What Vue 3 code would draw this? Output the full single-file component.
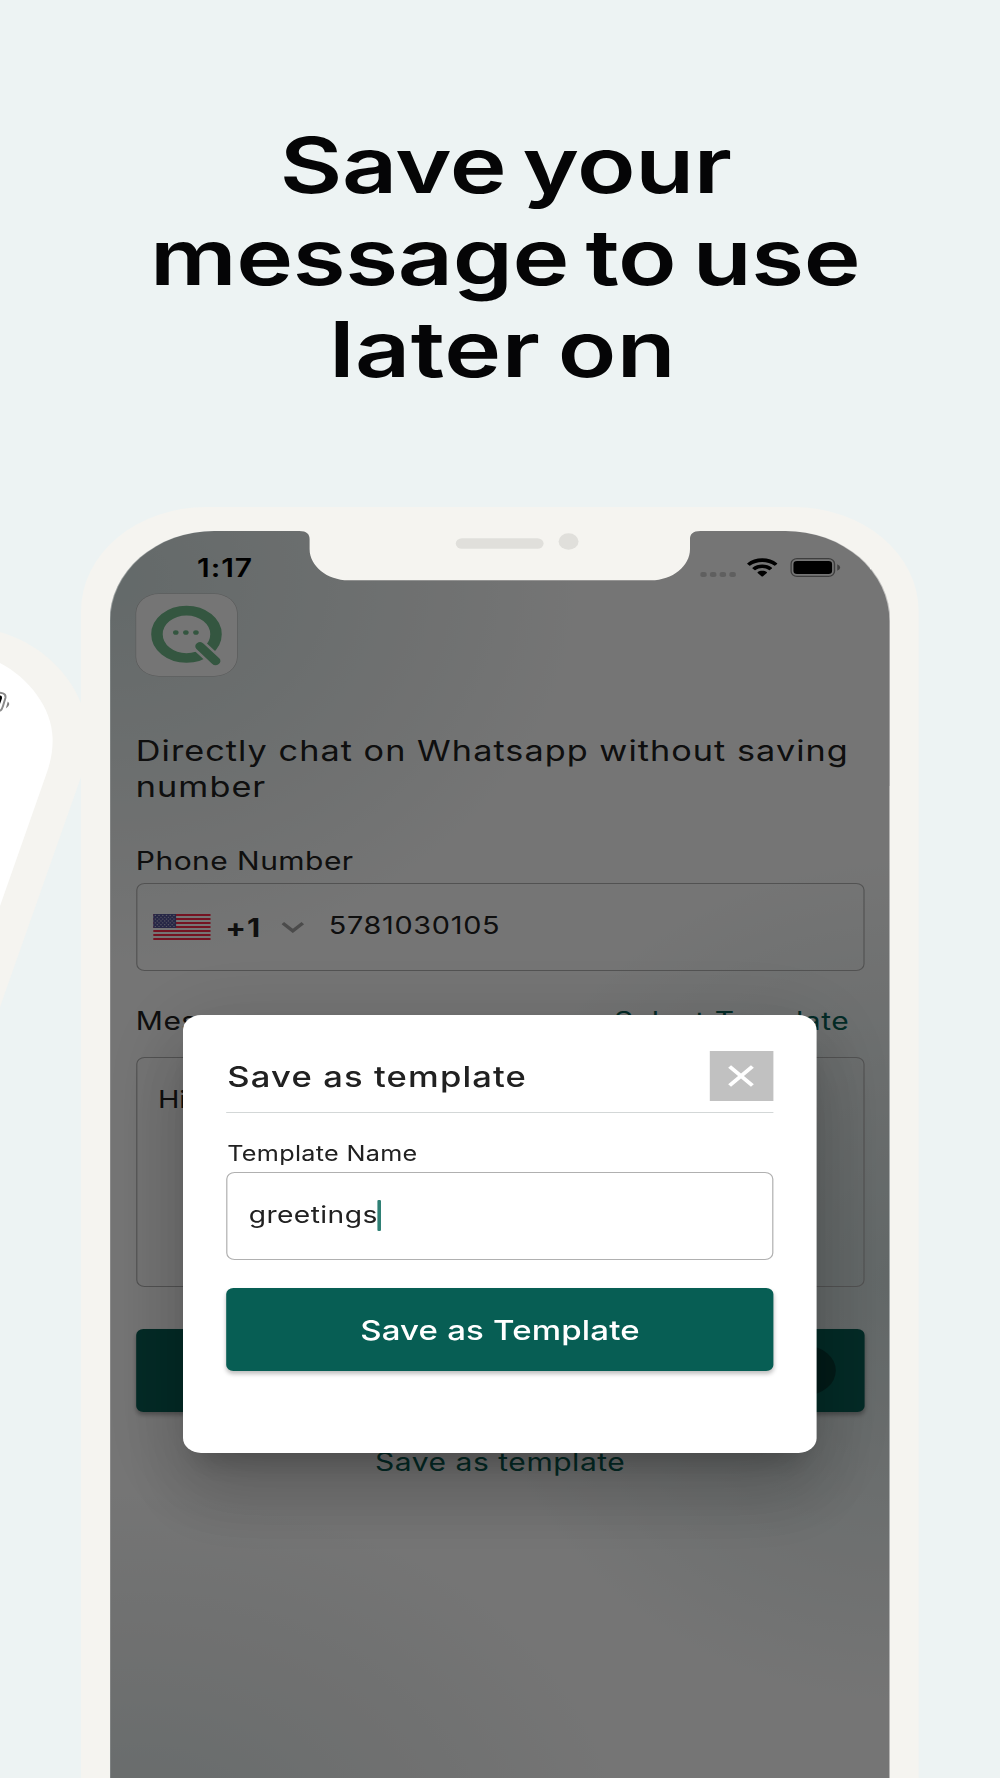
<template>
  <main class="promo">
    <h1 class="headline">
      <span v-for="line in headline" :key="line" class="headline-line">{{ line }}</span>
    </h1>

    <!-- neighbouring phone peeking in from the left -->
    <svg class="side-phone" viewBox="0 0 90 400" aria-hidden="true">
      <path class="side-frame" d="M0 12C34 22 66 46 81 83C90 108 89 135 81 157L0 387Z" />
      <path class="side-screen" d="M0 43C29 58 52 88 52.6 118C53 132 50 144 46 155L0 286Z" />
      <path class="side-battery" d="M0 72.6L3 73.4Q6 74.4 5.4 78L3 86Q2 89.6 0 91" />
      <path class="side-charge" d="M0 75.5Q2.4 75.4 1.9 78.5L0 84Z" />
      <path class="side-nub" d="M7.8 81.5Q11.5 84.5 5.8 88.5Z" />
    </svg>

    <section class="phone">
      <div class="screen">
        <div class="app">
          <header class="status">
            <span class="time">1:17</span>
            <div class="status-icons">
              <svg class="dots" viewBox="0 0 30 5">
                <rect v-for="n in 4" :key="n" :x="(n - 1) * 8.1" width="5.4" height="5" rx="1.8" />
              </svg>
              <svg class="wifi" viewBox="0 0 25.4 19">
                <path d="M12.7 .3C7.9 .3 3.5 2.2 .3 5.2Q0 5.6 .3 6L1.9 7.6Q2.3 8 2.7 7.6C5.4 5.2 8.9 3.9 12.7 3.9S20 5.2 22.7 7.6Q23.1 8 23.5 7.6L25.1 6Q25.4 5.6 25.1 5.2C21.9 2.2 17.5 .3 12.7 .3Z" />
                <path d="M12.7 6.5C9.6 6.5 6.8 7.7 4.6 9.7Q4.3 10.1 4.6 10.5L6.3 12.1Q6.7 12.5 7.1 12.1C8.6 10.8 10.5 10.1 12.7 10.1S16.8 10.8 18.3 12.1Q18.7 12.5 19.1 12.1L20.8 10.5Q21.1 10.1 20.8 9.7C18.6 7.7 15.8 6.5 12.7 6.5Z" />
                <path d="M12.7 12.7C11.2 12.7 9.9 13.2 8.9 14.1Q8.6 14.5 8.9 14.9L12.3 18.4Q12.7 18.8 13.1 18.4L16.5 14.9Q16.8 14.5 16.5 14.1C15.5 13.2 14.2 12.7 12.7 12.7Z" />
              </svg>
              <svg class="battery" viewBox="0 0 42 19">
                <rect class="battery-case" x=".7" y=".7" width="36.2" height="17.6" rx="5" />
                <rect x="2.7" y="2.9" width="32.2" height="13.2" rx="3" />
                <path class="battery-nub" d="M39.2 6.3Q41.7 7.5 41.7 9.5T39.2 12.7Z" />
              </svg>
            </div>
          </header>

          <div class="logo">
            <svg viewBox="0 0 84 82">
              <ellipse class="logo-ring" cx="41.9" cy="40.3" rx="24.6" ry="23.7" />
              <path class="logo-gap" d="M53.2 52.5L68 69" />
              <path class="logo-tail" d="M53.2 52.3L66.2 67" />
              <circle cx="33" cy="38.5" r="2.3" />
              <circle cx="41.4" cy="38.5" r="2.3" />
              <circle cx="49.8" cy="38.5" r="2.3" />
            </svg>
          </div>

          <p class="intro">Directly chat on Whatsapp without saving number</p>

          <label class="label phone-label">Phone Number</label>
          <div class="field phone-field">
            <svg class="flag" viewBox="0 0 48 26">
              <rect class="flag-white" width="48" height="26" />
              <rect v-for="n in 7" :key="n" class="flag-red" :y="(n - 1) * 4" width="48" height="2" />
              <rect class="flag-blue" width="19" height="14" />
              <g class="flag-stars">
                <circle v-for="s in stars" :key="s.id" :cx="s.x" :cy="s.y" r=".6" />
              </g>
            </svg>
            <span class="code">+1</span>
            <svg class="chevron" viewBox="0 0 18 12"><path d="M1 2L9 9.5L17 2" /></svg>
            <span class="number">5781030105</span>
          </div>

          <div class="message-head">
            <label class="label">Message</label>
            <a class="link select-link">Select Template</a>
          </div>
          <div class="field message-field">Hi</div>

          <div class="send"><span class="send-icon"></span></div>
          <a class="link save-link">Save as template</a>
        </div>

        <div class="overlay"></div>

        <div class="modal">
          <div class="modal-head">
            <h2 class="modal-title">Save as template</h2>
            <button class="close" @click="close">
              <svg viewBox="0 0 22 22"><path d="M1.5 1.5L20.5 20.5M20.5 1.5L1.5 20.5" /></svg>
            </button>
          </div>
          <label class="modal-label">Template Name</label>
          <div class="modal-input"><span class="typed">{{ templateName }}</span><i class="caret"></i></div>
          <button class="submit">Save as Template</button>
        </div>

        <svg class="notch" viewBox="0 0 334 50">
          <path d="M0 0H334C328 0 325.5 3 325.5 8V18C325.5 35 311 49.3 293 49.3H41C23 49.3 8.5 35 8.5 18V8C8.5 3 6 0 0 0Z" />
          <rect class="notch-part" x="130.3" y="7.3" width="73.2" height="10.4" rx="5.2" />
          <circle class="notch-part" cx="224.3" cy="10.5" r="8.3" />
        </svg>
      </div>
    </section>
  </main>
</template>

<script setup>
import { ref } from 'vue'

const headline = ['Save your', 'message to use', 'later on']
const templateName = ref('greetings')

const close = () => {
  templateName.value = ''
}

// rows of the flag alternate between 6 and 5 stars
const stars = []
for (let row = 0; row < 7; row++) {
  const count = row % 2 ? 5 : 6
  for (let i = 0; i < count; i++) {
    stars.push({ id: `${row}-${i}`, x: (row % 2 ? 3.3 : 1.7) + i * 3.1, y: 1.4 + row * 1.85 })
  }
}
</script>

<style>
body {
  margin: 0;
  background: #edf3f3;
}
</style>

<style scoped>
.promo {
  position: relative;
  width: 1000px;
  height: 1778px;
  overflow: hidden;
  background: #edf3f3;
  font-family: Inter, "Liberation Sans", sans-serif;
  color: #212121;
}

.headline {
  display: flex;
  flex-direction: column;
  align-items: center;
  height: 388.5px;
  margin: 0;
  padding: 118.5px 0 0 11px;
  font-size: 77px;
  font-weight: 600;
  line-height: 92.2px;
  letter-spacing: -0.3px;
  word-spacing: -6px;
  color: #050506;
}

.headline-line {
  white-space: nowrap;
  transform: scaleX(1.25);
}
.headline-line:last-child {
  margin-right: 5px;
  letter-spacing: 0.4px;
}

.side-phone {
  position: absolute;
  left: 0;
  top: 620px;
  width: 90px;
  height: 400px;
}
.side-frame { fill: #f5f4f0; }
.side-screen { fill: #fff; }
.side-battery { fill: none; stroke: #8a8a8a; stroke-width: 2; }
.side-charge { fill: #000; }
.side-nub { fill: #808080; }

/* the device is drawn wide: everything inside is stretched sideways */
.phone {
  position: relative;
  width: 698.4px;
  height: 1400px;
  margin-left: 81px;
  padding: 24px 24.4px 0;
  box-sizing: border-box;
  border-radius: 104px 104px 0 0;
  background: #f5f4f0;
  transform: scaleX(1.2);
  transform-origin: 0 0;
}

.screen {
  position: relative;
  height: 1376px;
  overflow: hidden;
  border-radius: 87px 87px 0 0 / 90px 90px 0 0;
  background: #fff;
}

.app {
  height: 1376px;
  padding: 0 21px 0 21.3px;
  display: flex;
  flex-direction: column;
  background:
    radial-gradient(ellipse 400px 390px at 0 50px, #d9e6e6 0%, #eaf0f0 45%, rgba(255, 255, 255, 0) 100%),
    radial-gradient(ellipse 370px 430px at 660px 750px, #d6e2e2 0%, #eaf0f0 50%, rgba(255, 255, 255, 0) 100%),
    radial-gradient(ellipse 420px 370px at 20px 1320px, #dfe9ea 0%, #f0f3f3 50%, rgba(255, 255, 255, 0) 100%),
    #fff;
}

.status {
  display: flex;
  justify-content: space-between;
  height: 41.3px;
  padding: 22px 20.4px 0 51px;
}

.time {
  font-size: 25px;
  font-weight: 600;
  line-height: 30px;
  letter-spacing: 0.8px;
  color: #000;
}

.status-icons {
  display: flex;
  align-items: center;
  gap: 9.8px;
  height: 29px;
}
.dots { width: 30px; height: 5px; margin-top: 13px; fill: #d0d0d0; }
.wifi { width: 25.4px; height: 19px; }
.battery { width: 42px; height: 19px; }
.battery-case { fill: none; stroke: #888; stroke-width: 1.2; }
.battery-nub { fill: #888; }

.logo {
  width: 84px;
  height: 82px;
  border-radius: 19px;
  background: #fff;
  box-shadow: 0 0 0 0.5px #c0c0c0;
}
.logo svg { display: block; width: 84px; height: 82px; fill: #71bb8b; }
.logo-ring { fill: none; stroke: #71bb8b; stroke-width: 9.6; }
.logo-gap { stroke: #fff; stroke-width: 12.5; stroke-linecap: round; }
.logo-tail { stroke: #71bb8b; stroke-width: 8; stroke-linecap: round; }

.intro {
  margin: 56.5px 0 0;
  font-size: 28.5px;
  line-height: 36px;
  letter-spacing: 0.88px;
}

.label {
  font-size: 25px;
  line-height: 30px;
  letter-spacing: 0.38px;
}
.phone-label { margin-top: 41.5px; }

.field {
  box-sizing: border-box;
  border: 1px solid #b4b4b4;
  border-radius: 7px;
}

.phone-field {
  display: flex;
  align-items: center;
  height: 88px;
  margin-top: 6.5px;
  padding-left: 13px;
}
.flag { width: 48.5px; height: 26px; }
.flag-white { fill: #fff; }
.flag-red { fill: #ff2b4b; }
.flag-blue { fill: #55559a; }
.flag-stars { fill: #c8c8dc; }
.code { width: 43px; margin: 1px 0 0 12px; font-size: 25.5px; font-weight: 700; letter-spacing: 0.8px; }
.chevron { width: 19px; height: 12.5px; margin-left: 4px; fill: none; stroke: #a4a4a4; stroke-width: 3; }
.number { margin: -2px 0 0 20.2px; font-size: 24px; letter-spacing: 0.6px; }

.message-head {
  display: flex;
  justify-content: space-between;
  margin-top: 35px;
  padding-right: 12.8px;
}

.link {
  font-size: 25px;
  line-height: 30px;
  letter-spacing: 0.45px;
  color: #075e54;
}

.message-field {
  height: 230px;
  margin-top: 21px;
  padding: 27px 17.4px;
  font-size: 24px;
  line-height: 30px;
}

.send {
  display: flex;
  flex-shrink: 0;
  align-items: center;
  justify-content: flex-end;
  height: 83px;
  margin-top: 42px;
  padding-right: 24px;
  border-radius: 6px;
  background: #075e54;
  box-shadow: 0 3px 4px rgba(0, 0, 0, 0.3);
}
.send-icon { width: 49px; height: 49px; border-radius: 50%; background: #053b35; }
.save-link { margin-top: 35px; text-align: center; }

.overlay {
  position: absolute;
  inset: 0;
  background: rgba(0, 0, 0, 0.54);
}

.modal {
  position: absolute;
  left: 60.6px;
  top: 484px;
  width: 528.4px;
  height: 437.5px;
  box-sizing: border-box;
  padding: 36px 36.4px 0;
  display: flex;
  flex-direction: column;
  border-radius: 15px;
  background: #fff;
  box-shadow:
    0 19px 26px -12px rgba(0, 0, 0, 0.2),
    0 42px 66px 5px rgba(0, 0, 0, 0.14),
    0 16px 80px 14px rgba(0, 0, 0, 0.12);
}

.modal-head {
  display: flex;
  align-items: center;
  justify-content: space-between;
  padding-bottom: 11px;
  border-bottom: 1px solid #d3d7d7;
}
.modal-title { margin: 0 0 0 0.6px; font-size: 28.8px; font-weight: 500; letter-spacing: 0.95px; }

.close {
  display: flex;
  align-items: center;
  justify-content: center;
  width: 53.3px;
  height: 50px;
  padding: 0;
  border: 0;
  background: #c1c1c1;
}
.close svg { width: 22px; height: 22px; fill: none; stroke: #fff; stroke-width: 3.4; }

.modal-label { margin: 28px 0 0 0.5px; font-size: 21px; line-height: 26px; letter-spacing: 0.25px; }

.modal-input {
  display: flex;
  align-items: center;
  height: 88px;
  margin-top: 5px;
  padding-left: 17.4px;
  box-sizing: border-box;
  border: 1px solid #b0b0b0;
  border-radius: 7px;
}
.typed { margin-top: -3px; font-size: 23.5px; letter-spacing: 0.35px; }
.caret { width: 3px; height: 31px; margin: -2px 0 0 -0.5px; border-radius: 1px; background: #2f8075; }

.submit {
  height: 83px;
  margin-top: 28px;
  border: 0;
  border-radius: 6px;
  background: #075e54;
  box-shadow: 0 3px 4px rgba(0, 0, 0, 0.25);
  font: 450 27.5px Inter, "Liberation Sans", sans-serif;
  letter-spacing: 0.15px;
  color: #fff;
}

.notch {
  position: absolute;
  left: 157.7px;
  top: 0;
  width: 334px;
  height: 50px;
  fill: #f5f4f0;
}
.notch-part { fill: #e0dfdb; }
</style>
